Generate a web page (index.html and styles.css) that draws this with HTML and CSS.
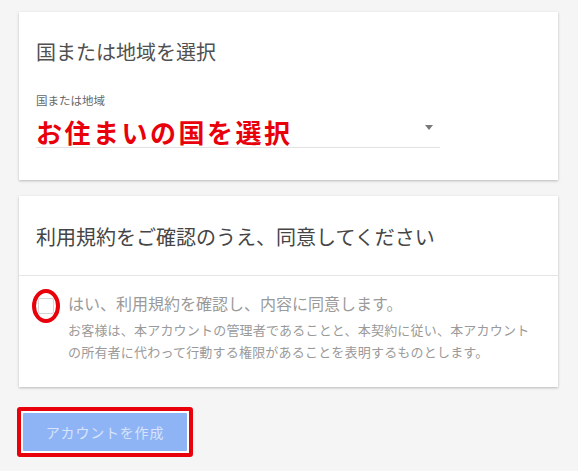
FILE: index.html
```html
<!DOCTYPE html>
<html lang="ja">
<head>
<meta charset="utf-8">
<title>アカウントを作成</title>
<link rel="stylesheet" href="styles.css">
</head>
<body>
<div class="page">
  <section class="card card-country">
    <h2 class="card-title">国または地域を選択</h2>
    <div class="field-label">国または地域</div>
    <div class="select">
      <span class="select-value">お住まいの国を選択</span>
      <span class="select-arrow"></span>
    </div>
  </section>

  <section class="card card-terms">
    <div class="terms-head">
      <h2 class="card-title">利用規約をご確認のうえ、同意してください</h2>
    </div>
    <div class="terms-body">
      <div class="check-wrap">
        <span class="checkbox"></span>
        <span class="check-mark"></span>
      </div>
      <div class="terms-text">
        <div class="check-label">はい、利用規約を確認し、内容に同意します。</div>
        <p class="terms-desc">お客様は、本アカウントの管理者であることと、本契約に従い、本アカウントの所有者に代わって行動する権限があることを表明するものとします。</p>
      </div>
    </div>
  </section>

  <div class="btn-frame">
    <button class="btn-create" type="button">アカウントを作成</button>
  </div>
</div>
</body>
</html>
```

FILE: styles.css
```css
* { box-sizing: border-box; }

html, body {
  margin: 0;
  padding: 0;
  background: #f5f5f5;
}

body {
  font-family: "Noto Sans CJK JP", "Noto Sans", sans-serif;
  color: #444;
}

.page {
  padding: 12px 20px 0 19px;
  display: flex;
  flex-direction: column;
  align-items: flex-start;
}

.card {
  width: 100%;
  background: #fff;
  box-shadow: 0 1px 2px rgba(0,0,0,0.18), 0 1px 4px rgba(0,0,0,0.08);
}

.card-title {
  margin: 0;
  font-size: 20px;
  line-height: 28px;
  font-weight: 400;
  color: #505050;
}

/* card 1 */
.card-country {
  padding: 26px 17px 32px;
  height: 168px;
}

.field-label {
  margin-top: 26px;
  font-size: 11.5px;
  line-height: 16px;
  color: #666;
}

.select {
  margin-top: 8px;
  width: 404px;
  height: 32px;
  border-bottom: 1px solid #e2e2e2;
  display: flex;
  align-items: center;
  justify-content: space-between;
}

.select-value {
  font-size: 26px;
  line-height: 31px;
  font-weight: 700;
  color: #e8000b;
  letter-spacing: 2.5px;
}

.select-arrow {
  width: 0;
  height: 0;
  border-left: 4.5px solid transparent;
  border-right: 4.5px solid transparent;
  border-top: 5px solid #7a7a7a;
  margin-right: 7px;
  margin-bottom: 8px;
}

/* card 2 */
.card-terms {
  margin-top: 16px;
  height: 191px;
}

.terms-head {
  padding: 27px 17px 24px;
  border-bottom: 1px solid #e6e6e6;
}

.terms-head .card-title {
  color: #454545;
}

.terms-body {
  display: flex;
  align-items: flex-start;
  padding: 16px 17px 24px 19px;
}

.check-wrap {
  position: relative;
  width: 16px;
  height: 16px;
  margin-top: 6px;
  margin-right: 14px;
  flex: none;
}

.checkbox {
  display: block;
  width: 16px;
  height: 16px;
  border: 1px solid #d6d6d6;
  border-radius: 2px;
  background: #fff;
}

.check-mark {
  position: absolute;
  left: -6px;
  top: -9px;
  width: 28px;
  height: 34px;
  border: 4px solid #e8000b;
  border-radius: 50%;
}

.check-label {
  font-size: 16px;
  line-height: 22px;
  color: #9a9a9a;
}

.terms-desc {
  margin: 5px 0 0;
  max-width: 466px;
  font-size: 13px;
  line-height: 22px;
  letter-spacing: 0.2px;
  color: #9a9a9a;
}

/* button */
.btn-frame {
  margin-top: 20px;
  margin-left: -2px;
  padding: 2px;
  border: 4px solid #e8000b;
  border-radius: 3px;
  background: #fff;
  display: flex;
}

.btn-create {
  width: 164px;
  height: 38px;
  border: none;
  border-radius: 1px;
  background: #8fb4f5;
  color: #d7e4fb;
  font-family: "Noto Sans CJK JP", "Noto Sans", sans-serif;
  font-size: 14px;
  letter-spacing: 0.8px;
  padding: 0;
}
```
